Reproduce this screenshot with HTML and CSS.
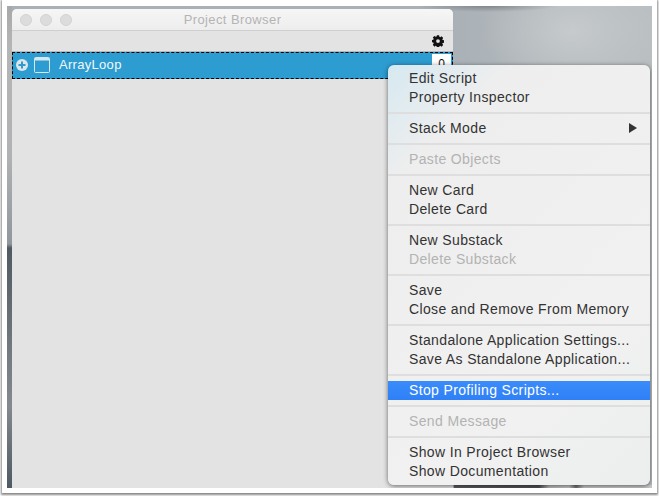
FILE: index.html
```html
<!DOCTYPE html>
<html lang="en">
<head>
<meta charset="utf-8">
<title>Project Browser</title>
<link rel="stylesheet" href="styles.css">
</head>
<body>
<div class="shot">
  <div class="desktop">
    <section class="window">
      <header class="titlebar">
        <div class="lights"><i></i><i></i><i></i></div>
        <div class="title">Project Browser</div>
      </header>
      <div class="toolbar">
        <svg class="gear" width="12" height="12" viewBox="0 0 12 12"><path fill="#111" fill-rule="evenodd" d="M4.900.3h2.200l.3 1.500.9.4 1.300-.9 1.600 1.600-.9 1.300.4.9 1.500.3v2.200l-1.500.3-.4.9.9 1.300-1.600 1.600-1.300-.9-.9.4-.3 1.500H4.900l-.3-1.500-.9-.4-1.300.9L.8 9.700l.9-1.300-.4-.9L-.2 7.200V5l1.500-.3.4-.9-.9-1.300L2.400.9l1.300.9.9-.4zM6 4.200a1.900 1.900 0 1 0 0 3.800 1.900 1.900 0 0 0 0-3.800z"/></svg>
      </div>
      <div class="row">
        <svg class="plus" width="12" height="12" viewBox="0 0 12 12"><circle cx="6" cy="6" r="6" fill="#dfe6ea"/><path d="M6 2.500v7M2.500 6h7" stroke="#2d9cd0" stroke-width="2"/></svg>
        <svg class="stack" width="16" height="16" viewBox="0 0 16 16"><rect x=".5" y=".5" width="15" height="15" rx="1" fill="none" stroke="#d5e8f2"/><path d="M1 1h14v2.500H1z" fill="#d5e8f2"/></svg>
        <span class="name">ArrayLoop</span>
        <span class="count">0</span>
      </div>
    </section>
    <nav class="menu">
      <div class="item">Edit Script</div>
      <div class="item">Property Inspector</div>
      <hr>
      <div class="item sub">Stack Mode<span class="arrow"></span></div>
      <hr>
      <div class="item off">Paste Objects</div>
      <hr>
      <div class="item">New Card</div>
      <div class="item">Delete Card</div>
      <hr>
      <div class="item">New Substack</div>
      <div class="item off">Delete Substack</div>
      <hr>
      <div class="item">Save</div>
      <div class="item">Close and Remove From Memory</div>
      <hr>
      <div class="item">Standalone Application Settings...</div>
      <div class="item">Save As Standalone Application...</div>
      <hr>
      <div class="item on">Stop Profiling Scripts...</div>
      <hr>
      <div class="item off">Send Message</div>
      <hr>
      <div class="item">Show In Project Browser</div>
      <div class="item">Show Documentation</div>
    </nav>
  </div>
</div>
</body>
</html>
```
FILE: styles.css
```css
* { box-sizing: border-box; }
html, body { margin: 0; height: 100%; background: #fff; overflow: hidden; }
body { font-family: "Liberation Sans", Arial, sans-serif; }
.shot {
  width: 655px; height: 493px; margin: 0 0 0 2px;
  padding: 6px 4px 5px 5px; background: #fff;
  box-shadow: 0 1px 2px 1px #8a8a8a;
}
.desktop {
  position: relative; width: 645px; height: 482px; overflow: hidden;
  background:
    linear-gradient(180deg, #a8a8a8 0, #b5b5b5 40px, #b0b2b3 150px, #8f979d 238px, #4f5a62 242px, #6e767c 330px, #83898e 400px, #4d5a64 482px) left top / 5px 100% no-repeat,
    linear-gradient(90deg, #5a5d60 0, #4f5256 85px, #b9bcbe 95px, #c8cacb 115px, #6c6f72 122px, #c8cacb 130px) 447px 479px / 198px 3px no-repeat,
    radial-gradient(ellipse 70px 6px at 480px 0, rgba(110,115,120,.7) 0%, rgba(110,115,120,0) 100%),
    radial-gradient(ellipse 90px 60px at 565px 25px, #c6cacc 0%, rgba(198,202,204,0) 100%),
    linear-gradient(90deg, #aab1b6 440px, #b9bec1 640px);
}
.window {
  position: absolute; left: 5px; top: 3px; width: 441px; height: 479px;
  background: #e3e3e3; border-radius: 5px 5px 0 0; overflow: hidden;
}
.titlebar {
  height: 22px; display: flex; align-items: center; position: relative;
  background: linear-gradient(#f6f6f6, #ededed); border-bottom: 1px solid #cfcfcf;
}
.lights { display: flex; gap: 8px; padding-left: 8px; }
.lights i { width: 12px; height: 12px; border-radius: 50%; background: #dcdcdc; border: 1px solid #d2d2d2; }
.title { position: absolute; inset: 0; text-align: center; line-height: 22px; font-size: 13px; letter-spacing: .4px; color: #b4b4b4; }
.toolbar { height: 21px; display: flex; justify-content: flex-end; align-items: center; padding: 0 9px 2px 0; }
.row {
  height: 27px; display: flex; align-items: center; position: relative;
  background: #2d9cd0; border: 1px dashed #000;
  box-shadow: 0 -1px 0 #b8b8b8;
  padding: 0 0 2px 3px; color: #fff;
}
.plus { margin-right: 6px; }
.stack { margin-right: 9px; }
.name { font-size: 13px; letter-spacing: .3px; color: #f2f8fb; }
.count {
  position: absolute; right: 1px; top: 1px; width: 19px; height: 24px;
  background: #fff; color: #111; font-size: 12px; text-align: center; line-height: 20px;
}
.menu {
  position: absolute; left: 381px; top: 59px; width: 262px; height: 420px;
  padding: 4px 0; border-radius: 6px;
  background: linear-gradient(135deg, #d6e9f1 0%, #eeeeee 18%, #f1f1f1 70%, #eceeee 100%);
  box-shadow: 0 1px 5px rgba(0,0,0,.55);
  font-size: 14px; letter-spacing: .36px; color: #333;
}
.menu hr { height: 2px; margin: 5px 0; border: 0; background: #dedede; }
.item { height: 19px; line-height: 19px; padding-left: 21px; white-space: nowrap; }
.sub { position: relative; }
.arrow {
  position: absolute; right: 13px; top: 4px; width: 0; height: 0;
  border-left: 8px solid #333; border-top: 5px solid transparent; border-bottom: 5px solid transparent;
}
.off { color: #b3b3b3; }
.on { background: linear-gradient(#3a8cfb, #2f80f6); color: #fff; }
```
